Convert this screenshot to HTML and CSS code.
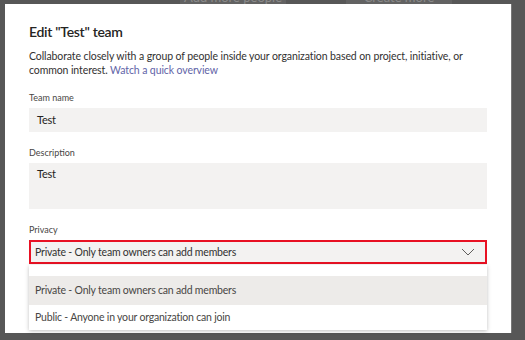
FILE: index.html
```html
<!DOCTYPE html>
<html lang="en">
  <head>
    <meta charset="UTF-8" />
    <meta name="viewport" content="width=device-width, initial-scale=1.0" />
    <title>Edit team</title>
    <link rel="stylesheet" href="styles.css">
  </head>
  <body>
    <!-- Page behind the dialog -->
    <div class="backdrop-bar">
      <span class="backdrop-item">Add more people</span>
      <span class="backdrop-item">Create more channels</span>
    </div>

    <!-- Dialog -->
    <div class="dialog">
      <h2 class="dialog-title">Edit "Test" team</h2>
      <p class="dialog-intro">
        Collaborate closely with a group of people inside your organization based on project, initiative, or
        common interest. <a href="#">Watch a quick overview</a>
      </p>

      <div class="field">
        <label>Team name</label>
        <div class="input">Test</div>
      </div>

      <div class="field">
        <label>Description</label>
        <div class="input textarea">Test</div>
      </div>

      <div class="field">
        <label>Privacy</label>
        <div class="select-wrap">
          <div class="select">
            <span>Private - Only team owners can add members</span>
            <svg class="chevron" width="14" height="8" viewBox="0 0 14 8">
              <path d="M1 1 L7 7 L13 1" fill="none" stroke="#605e5c" stroke-width="1" />
            </svg>
          </div>
          <ul class="options">
            <li class="selected">Private - Only team owners can add members</li>
            <li>Public - Anyone in your organization can join</li>
          </ul>
        </div>
      </div>
    </div>
  </body>
</html>
```

FILE: styles.css
```css
/* General Page Styles */
body {
  margin: 0;
  padding: 0;
  width: 525px;
  height: 340px;
  overflow: hidden;
  background-color: #575757;
  font-family: "Lato", "Noto Sans", sans-serif;
  color: #252423;
}

/* Strip of the page behind */
.backdrop-bar {
  height: 4px;
  overflow: hidden;
  display: flex;
  gap: 60px;
  padding-left: 180px;
}

.backdrop-item {
  display: block;
  width: 106px;
  margin-top: -10px;
  font-size: 13px;
  line-height: 14px;
  color: #8a8a8a;
  background-color: #626262;
  text-align: center;
}

/* Dialog */
.dialog {
  margin-left: 5px;
  width: 458px;
  height: 329px;
  padding: 0 24px;
  background-color: #fff;
  box-shadow: 1px 0 0 #777;
}

.dialog-title {
  margin: 0;
  padding-top: 18px;
  font-size: 14px;
  font-weight: 600;
  line-height: 20px;
  letter-spacing: -0.3px;
}

.dialog-intro {
  margin: 7px 0 0 0;
  font-size: 10.5px;
  line-height: 14px;
  letter-spacing: -0.1px;
  color: #323130;
}

.dialog-intro a {
  color: #6264a7;
  text-decoration: none;
}

/* Form fields */
.field {
  margin-top: 15px;
}

.field label {
  display: block;
  font-size: 9px;
  line-height: 12px;
  color: #484644;
  margin-bottom: 4px;
}

.input {
  height: 24px;
  line-height: 24px;
  padding: 0 8px;
  background-color: #f3f2f1;
  font-size: 11px;
  letter-spacing: -0.2px;
}

.textarea {
  height: 46px;
  line-height: 22px;
}

/* Privacy select */
.select-wrap {
  position: relative;
}

.select {
  height: 20px;
  padding: 0 10px 0 4px;
  display: flex;
  justify-content: space-between;
  align-items: center;
  background-color: #f3f2f1;
  border: 2px solid #e81123;
  font-size: 10.5px;
  letter-spacing: -0.2px;
  color: #323130;
}

.chevron {
  display: block;
}

.options {
  position: absolute;
  top: 25px;
  left: 0;
  right: 0;
  margin: 0;
  padding: 11px 0 0 0;
  list-style: none;
  background-color: #fff;
  box-shadow: 0 1px 4px rgba(0, 0, 0, 0.25);
  height: 54px;
}

.options li {
  height: 29px;
  line-height: 29px;
  padding: 0 6px;
  font-size: 10.5px;
  letter-spacing: -0.2px;
  color: #484644;
}

.options li.selected {
  background-color: #edebe9;
}

.options li + li {
  height: 25px;
  line-height: 25px;
}
```
